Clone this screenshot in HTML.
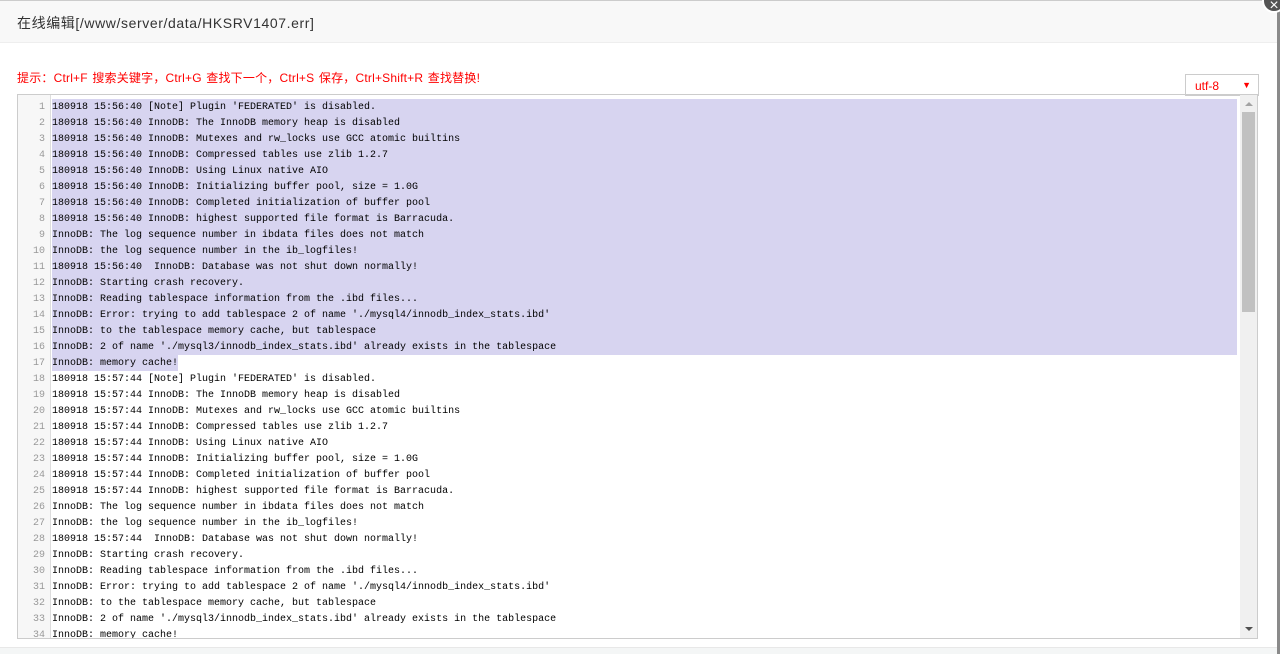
<!DOCTYPE html>
<html><head><meta charset="utf-8"><style>
*{margin:0;padding:0;box-sizing:border-box}
body{width:1280px;height:654px;overflow:hidden;background:#fff;position:relative;font-family:"Liberation Sans","Noto Sans CJK SC",sans-serif}
.hdr{position:absolute;left:0;top:0;width:1278px;height:43px;background:#f8f8f8;border-bottom:1px solid #eee;border-top:1px solid #ccc;font-size:14px;color:#333;padding:12px 0 0 17px;letter-spacing:0.6px}
.rstrip{position:absolute;left:1277px;top:0;width:3px;height:654px;background:#8a8a8a}
.close{position:absolute;left:1262px;top:-11px;width:24px;height:24px;border-radius:50%;background:#555;color:#fff;font-size:16px;text-align:center;line-height:30px;border:2px solid #fff}
.tip{position:absolute;left:17px;top:69px;font-size:12px;color:#f00;letter-spacing:0.2px;word-spacing:1px}
.sel{position:absolute;left:1185px;top:74px;width:74px;height:22px;border:1px solid #ccc;background:#fff;color:#f00;font-size:12px;padding:4px 0 0 9px}
.sel span{position:absolute;right:7px;top:5px;font-size:9px}
.ed{position:absolute;left:17px;top:94px;width:1241px;height:545px;border:1px solid #ccc;overflow:hidden}
.gut{position:absolute;left:0;top:0;width:33px;height:100%;background:#f7f7f7;border-right:1px solid #ddd}
.hl{position:absolute;left:34px;top:4px;width:1185px;height:256px;background:#d7d4f0}
.hl2{position:absolute;left:34px;top:260px;width:126px;height:16px;background:#d7d4f0}
.lines{position:absolute;left:0;top:5px;font-family:"Liberation Mono",monospace;font-size:10px;line-height:16px;color:#000;white-space:pre}
.ln{display:inline-block;width:27px;text-align:right;color:#999;margin-right:7px}
.sb{position:absolute;left:1222px;top:0;width:18px;height:100%;background:#f0f0f0}
.th{position:absolute;left:2px;top:17px;width:13px;height:200px;background:#c1c1c1}
.up,.dn{position:absolute;left:5px;width:0;height:0;border-left:4px solid transparent;border-right:4px solid transparent}
.up{top:7px;border-bottom:4px solid #a3a3a3}
.dn{bottom:7px;border-top:4px solid #505050}
.foot{position:absolute;left:0;top:647px;width:1277px;height:7px;background:#f4f6f6;border-top:1px solid #e8e8e8}
</style></head><body>
<div class="hdr">在线编辑[/www/server/data/HKSRV1407.err]</div>
<div class="rstrip"></div>
<div class="close">×</div>
<div class="tip">提示：Ctrl+F 搜索关键字，Ctrl+G 查找下一个，Ctrl+S 保存，Ctrl+Shift+R 查找替换!</div>
<div class="sel">utf-8<span>▼</span></div>
<div class="ed">
<div class="gut"></div>
<div class="hl"></div><div class="hl2"></div>
<div class="lines"><span class="ln">1</span>180918 15:56:40 [Note] Plugin 'FEDERATED' is disabled.
<span class="ln">2</span>180918 15:56:40 InnoDB: The InnoDB memory heap is disabled
<span class="ln">3</span>180918 15:56:40 InnoDB: Mutexes and rw_locks use GCC atomic builtins
<span class="ln">4</span>180918 15:56:40 InnoDB: Compressed tables use zlib 1.2.7
<span class="ln">5</span>180918 15:56:40 InnoDB: Using Linux native AIO
<span class="ln">6</span>180918 15:56:40 InnoDB: Initializing buffer pool, size = 1.0G
<span class="ln">7</span>180918 15:56:40 InnoDB: Completed initialization of buffer pool
<span class="ln">8</span>180918 15:56:40 InnoDB: highest supported file format is Barracuda.
<span class="ln">9</span>InnoDB: The log sequence number in ibdata files does not match
<span class="ln">10</span>InnoDB: the log sequence number in the ib_logfiles!
<span class="ln">11</span>180918 15:56:40  InnoDB: Database was not shut down normally!
<span class="ln">12</span>InnoDB: Starting crash recovery.
<span class="ln">13</span>InnoDB: Reading tablespace information from the .ibd files...
<span class="ln">14</span>InnoDB: Error: trying to add tablespace 2 of name './mysql4/innodb_index_stats.ibd'
<span class="ln">15</span>InnoDB: to the tablespace memory cache, but tablespace
<span class="ln">16</span>InnoDB: 2 of name './mysql3/innodb_index_stats.ibd' already exists in the tablespace
<span class="ln">17</span>InnoDB: memory cache!
<span class="ln">18</span>180918 15:57:44 [Note] Plugin 'FEDERATED' is disabled.
<span class="ln">19</span>180918 15:57:44 InnoDB: The InnoDB memory heap is disabled
<span class="ln">20</span>180918 15:57:44 InnoDB: Mutexes and rw_locks use GCC atomic builtins
<span class="ln">21</span>180918 15:57:44 InnoDB: Compressed tables use zlib 1.2.7
<span class="ln">22</span>180918 15:57:44 InnoDB: Using Linux native AIO
<span class="ln">23</span>180918 15:57:44 InnoDB: Initializing buffer pool, size = 1.0G
<span class="ln">24</span>180918 15:57:44 InnoDB: Completed initialization of buffer pool
<span class="ln">25</span>180918 15:57:44 InnoDB: highest supported file format is Barracuda.
<span class="ln">26</span>InnoDB: The log sequence number in ibdata files does not match
<span class="ln">27</span>InnoDB: the log sequence number in the ib_logfiles!
<span class="ln">28</span>180918 15:57:44  InnoDB: Database was not shut down normally!
<span class="ln">29</span>InnoDB: Starting crash recovery.
<span class="ln">30</span>InnoDB: Reading tablespace information from the .ibd files...
<span class="ln">31</span>InnoDB: Error: trying to add tablespace 2 of name './mysql4/innodb_index_stats.ibd'
<span class="ln">32</span>InnoDB: to the tablespace memory cache, but tablespace
<span class="ln">33</span>InnoDB: 2 of name './mysql3/innodb_index_stats.ibd' already exists in the tablespace
<span class="ln">34</span>InnoDB: memory cache!</div>
<div class="sb"><div class="up"></div><div class="th"></div><div class="dn"></div></div>
</div>
<div class="foot"></div>
</body></html>
